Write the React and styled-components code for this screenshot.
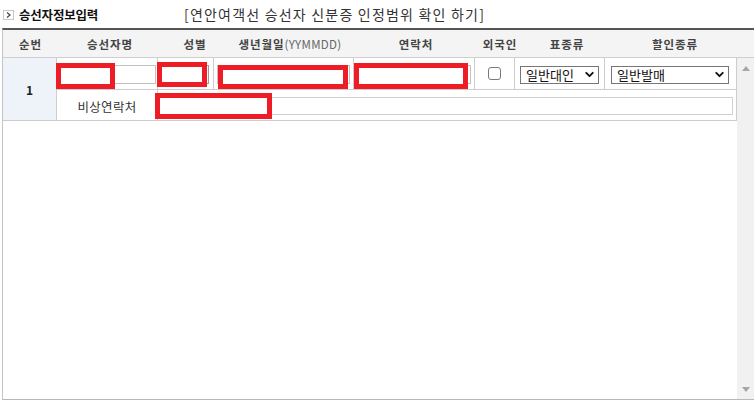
import React from 'react';
import styled, { createGlobalStyle } from 'styled-components';
import { ChevronDown } from 'lucide-react';

const GlobalStyle = createGlobalStyle`
  html, body {
    margin: 0;
    padding: 0;
    background: #fff;
  }
  body {
    font-family: "Noto Sans CJK KR", "Noto Sans", sans-serif;
    color: #222;
  }
  * {
    box-sizing: border-box;
  }
`;

const Page = styled.div`
  position: relative;
  width: 756px;
  height: 405px;
`;

const TitleBar = styled.div`
  display: flex;
  align-items: center;
  height: 28px;
  padding-left: 3px;
`;

const TitleIcon = styled.span`
  display: flex;
  align-items: center;
  justify-content: center;
  width: 11px;
  height: 10px;
  border: 1px solid #c8c8c8;
  margin-right: 5px;
  margin-top: 1px;
`;

const TitleText = styled.span`
  width: 165px;
  font-size: 12.5px;
  font-weight: 700;
  letter-spacing: -0.2px;
  color: #111;
`;

const GuideLink = styled.span`
  font-size: 14px;
  letter-spacing: 1.2px;
  color: #333;
  cursor: pointer;
`;

const Board = styled.div`
  margin-left: 2px;
  width: 752px;
`;

const HeaderRow = styled.div`
  display: grid;
  grid-template-columns: 55px 104px 66px 124px 128px 40px 94px 122px 18px;
  height: 30px;
  border-top: 2px solid #555;
  border-left: 1px solid #c4c4c4;
  border-bottom: 1px solid #cfcfcf;
  background: #f4f4f4;
`;

const HeadCell = styled.div`
  display: flex;
  align-items: center;
  justify-content: center;
  font-size: 11.5px;
  font-weight: 700;
  letter-spacing: 0.9px;
  color: #444;
  white-space: nowrap;
`;

const HeadNote = styled.span`
  font-weight: 400;
  letter-spacing: 0.3px;
  color: #666;
`;

const BodyFrame = styled.div`
  display: flex;
  height: 342px;
  border-left: 1px solid #c4c4c4;
  border-bottom: 1px solid #b8b8b8;
`;

const BodyArea = styled.div`
  flex: 1;
`;

const RowGrid = styled.div`
  display: grid;
  grid-template-columns: 54px 101px 56px 140px 121px 40px 90px 132px;
  grid-template-rows: 32px 31px;
`;

const Cell = styled.div`
  display: flex;
  align-items: center;
  justify-content: ${p => (p.$center ? 'center' : 'flex-start')};
  padding: ${p => p.$pad || '0 3px'};
  padding-top: 2px;
  border-right: 1px solid #cdcdcd;
  border-bottom: 1px solid #cdcdcd;
  grid-column: ${p => p.$span || 'auto'};
`;

const NoCell = styled(Cell)`
  grid-row: span 2;
  justify-content: center;
  padding-bottom: 2px;
  background: #eef2f9;
  font-size: 12px;
  font-weight: 700;
  color: #222;
`;

const LabelCell = styled(Cell)`
  justify-content: center;
  font-size: 12.5px;
  letter-spacing: 0.3px;
  color: #333;
`;

const TextInput = styled.input`
  width: 100%;
  height: ${p => p.$h || 19}px;
  border: 1px solid ${p => p.$line || '#c2c2c2'};
  background: #fff;
  padding: 0 3px;
  font: inherit;
  font-size: 12px;
  outline: none;
`;

const CheckBox = styled.input.attrs({ type: 'checkbox' })`
  appearance: none;
  width: 13px;
  height: 13px;
  margin: 0 0 2px 0;
  border: 1px solid #7a7a7a;
  border-radius: 3px;
  background: #fff;
`;

const SelectBox = styled.div`
  display: flex;
  align-items: center;
  justify-content: space-between;
  width: ${p => p.$w}px;
  height: 18px;
  padding: 0 2px 0 5px;
  border: 1px solid #767676;
  background: #fff;
  font-size: 13px;
  color: #111;
  white-space: nowrap;
`;

const ScrollBar = styled.div`
  display: flex;
  flex-direction: column;
  justify-content: space-between;
  align-items: center;
  width: 17px;
  padding: 8px 0 7px;
  background: #f1f1f1;
`;

const Redact = styled.div`
  position: absolute;
  left: ${p => p.$x}px;
  top: ${p => p.$y}px;
  width: ${p => p.$w}px;
  height: ${p => p.$h}px;
  border: 5px solid #ee1c25;
  background: #fff;
`;

const headers = [
  { label: '순번' },
  { label: '승선자명' },
  { label: '성별' },
  { label: '생년월일', note: '(YYMMDD)' },
  { label: '연락처' },
  { label: '외국인' },
  { label: '표종류' },
  { label: '할인종류' },
  { label: '' },
];

const redactions = [
  { x: 56, y: 63, w: 59, h: 26 },
  { x: 157, y: 62, w: 50, h: 25 },
  { x: 218, y: 65, w: 130, h: 24 },
  { x: 354, y: 63, w: 114, h: 26 },
  { x: 155, y: 93, w: 117, h: 26 },
];

const Arrow = ({ down }) => (
  <svg width="8" height="5" viewBox="0 0 8 5">
    <path d={down ? 'M0 0 L8 0 L4 5 Z' : 'M0 5 L8 5 L4 0 Z'} fill="#a6a6a6" />
  </svg>
);

const App = () => {
  return (
    <Page>
      <GlobalStyle />
      <TitleBar>
        <TitleIcon>
          <svg width="5" height="6" viewBox="0 0 5 6">
            <path d="M1 0.5 L4 3 L1 5.5" fill="none" stroke="#444" strokeWidth="1.2" />
          </svg>
        </TitleIcon>
        <TitleText>승선자정보입력</TitleText>
        <GuideLink>[연안여객선 승선자 신분증 인정범위 확인 하기]</GuideLink>
      </TitleBar>

      <Board>
        <HeaderRow>
          {headers.map((h, i) => (
            <HeadCell key={i}>
              {h.label}
              {h.note && <HeadNote>{h.note}</HeadNote>}
            </HeadCell>
          ))}
        </HeaderRow>

        <BodyFrame>
          <BodyArea>
            <RowGrid>
              <NoCell>1</NoCell>
              <Cell $pad="0 1px 0 3px">
                <TextInput />
              </Cell>
              <Cell $pad="0 4px 0 2px">
                <TextInput $line="#9a9a9a" />
              </Cell>
              <Cell>
                <TextInput />
              </Cell>
              <Cell>
                <TextInput />
              </Cell>
              <Cell $center>
                <CheckBox />
              </Cell>
              <Cell $pad="0 0 0 5px">
                <SelectBox $w={79}>
                  일반대인
                  <ChevronDown size={13} strokeWidth={3.5} color="#111" />
                </SelectBox>
              </Cell>
              <Cell $pad="0 0 0 6px">
                <SelectBox $w={118}>
                  일반발매
                  <ChevronDown size={13} strokeWidth={3.5} color="#111" />
                </SelectBox>
              </Cell>

              <LabelCell>비상연락처</LabelCell>
              <Cell $span="span 6" $pad="0 3px 0 1px">
                <TextInput $h={18} $line="#d0d0d0" />
              </Cell>
            </RowGrid>
          </BodyArea>
          <ScrollBar>
            <Arrow />
            <Arrow down />
          </ScrollBar>
        </BodyFrame>
      </Board>

      {redactions.map((r, i) => (
        <Redact key={i} $x={r.x} $y={r.y} $w={r.w} $h={r.h} />
      ))}
    </Page>
  );
};

export default App;
